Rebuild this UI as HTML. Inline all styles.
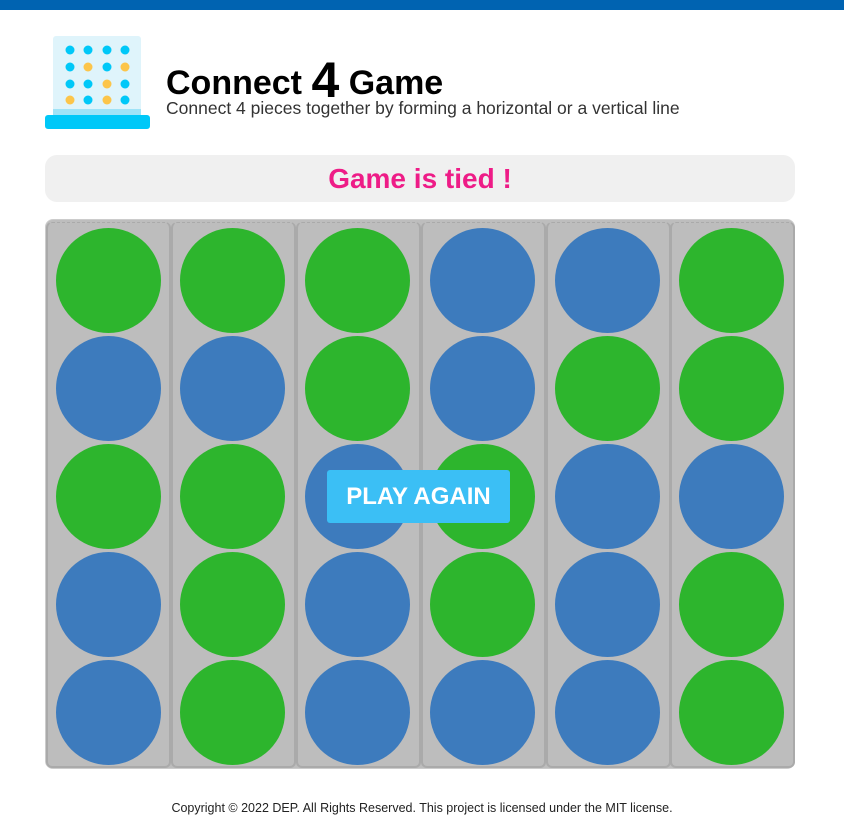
<!DOCTYPE html>
<html><head><meta charset="utf-8"><style>
*{margin:0;padding:0;box-sizing:border-box}
body{width:844px;height:825px;background:#fff;font-family:"Liberation Sans",sans-serif;position:relative;overflow:hidden}
.top{position:absolute;left:0;top:0;width:844px;height:10px;background:#0063b1}
.title{position:absolute;left:166px;top:51px;font-weight:bold;font-size:34px;color:#000;white-space:nowrap}
.title b{font-size:50px;vertical-align:-3px}
.sub{position:absolute;left:166px;top:98px;font-size:17.5px;color:#333;white-space:nowrap}
.status{position:absolute;left:45px;top:155px;width:750px;height:47px;background:#f0f0f0;border-radius:12px;text-align:center;line-height:48px;color:#ee1c87;font-weight:bold;font-size:28px}
.board{position:absolute;left:45px;top:219px;width:750px;height:550px;background:#bdbdbd;border-radius:8px;border:1px solid #ccc}
.col{position:absolute;top:2px;width:125px;height:546px;border:2px solid #aaa;border-radius:6px;border-top:1px dashed #aaa}
.c{position:absolute;width:105px;height:105px;border-radius:50%}
.g{background:#2db52d}.b{background:#3d7bbd}
.btn{position:absolute;left:327px;top:470px;width:183px;height:53px;background:#3bbff5;border-radius:3px;color:#fff;font-weight:bold;font-size:24px;text-align:center;line-height:53px}
.foot{position:absolute;left:0;width:844px;top:801px;text-align:center;font-size:12.5px;color:#222}
</style></head><body>
<div class="top"></div>
<svg style="position:absolute;left:45px;top:36px" width="106" height="94">
<rect x="8" y="0" width="88" height="84" rx="3" fill="#dff4fb"/>
<rect x="8" y="73" width="88" height="8" fill="#9fe3f7"/>
<rect x="0" y="79" width="105" height="14" rx="3" fill="#00c8f8"/>
<g fill="#00c8f8">
<circle cx="25" cy="14" r="4.5"/><circle cx="43" cy="14" r="4.5"/><circle cx="62" cy="14" r="4.5"/><circle cx="80" cy="14" r="4.5"/>
<circle cx="25" cy="31" r="4.5"/><circle cx="62" cy="31" r="4.5"/>
<circle cx="25" cy="48" r="4.5"/><circle cx="43" cy="48" r="4.5"/><circle cx="80" cy="48" r="4.5"/>
<circle cx="43" cy="64" r="4.5"/><circle cx="80" cy="64" r="4.5"/></g>
<g fill="#fcc54a">
<circle cx="43" cy="31" r="4.5"/><circle cx="80" cy="31" r="4.5"/><circle cx="62" cy="48" r="4.5"/><circle cx="25" cy="64" r="4.5"/><circle cx="62" cy="64" r="4.5"/></g>
</svg>
<div class="title">Connect <b>4</b> Game</div>
<div class="sub">Connect 4 pieces together by forming a horizontal or a vertical line</div>
<div class="status">Game is tied !</div>
<div class="board">
<div class="col" style="left:0"></div><div class="col" style="left:125px"></div><div class="col" style="left:250px"></div><div class="col" style="left:375px"></div><div class="col" style="left:500px"></div><div class="col" style="left:624px"></div>
</div>
<div class="c g" style="left:56px;top:228px"></div><div class="c g" style="left:180px;top:228px"></div><div class="c g" style="left:305px;top:228px"></div><div class="c b" style="left:430px;top:228px"></div><div class="c b" style="left:555px;top:228px"></div><div class="c g" style="left:679px;top:228px"></div>
<div class="c b" style="left:56px;top:336px"></div><div class="c b" style="left:180px;top:336px"></div><div class="c g" style="left:305px;top:336px"></div><div class="c b" style="left:430px;top:336px"></div><div class="c g" style="left:555px;top:336px"></div><div class="c g" style="left:679px;top:336px"></div>
<div class="c g" style="left:56px;top:444px"></div><div class="c g" style="left:180px;top:444px"></div><div class="c b" style="left:305px;top:444px"></div><div class="c g" style="left:430px;top:444px"></div><div class="c b" style="left:555px;top:444px"></div><div class="c b" style="left:679px;top:444px"></div>
<div class="c b" style="left:56px;top:552px"></div><div class="c g" style="left:180px;top:552px"></div><div class="c b" style="left:305px;top:552px"></div><div class="c g" style="left:430px;top:552px"></div><div class="c b" style="left:555px;top:552px"></div><div class="c g" style="left:679px;top:552px"></div>
<div class="c b" style="left:56px;top:660px"></div><div class="c g" style="left:180px;top:660px"></div><div class="c b" style="left:305px;top:660px"></div><div class="c b" style="left:430px;top:660px"></div><div class="c b" style="left:555px;top:660px"></div><div class="c g" style="left:679px;top:660px"></div>
<div class="btn">PLAY AGAIN</div>
<div class="foot">Copyright © 2022 DEP. All Rights Reserved. This project is licensed under the MIT license.</div>
</body></html>
